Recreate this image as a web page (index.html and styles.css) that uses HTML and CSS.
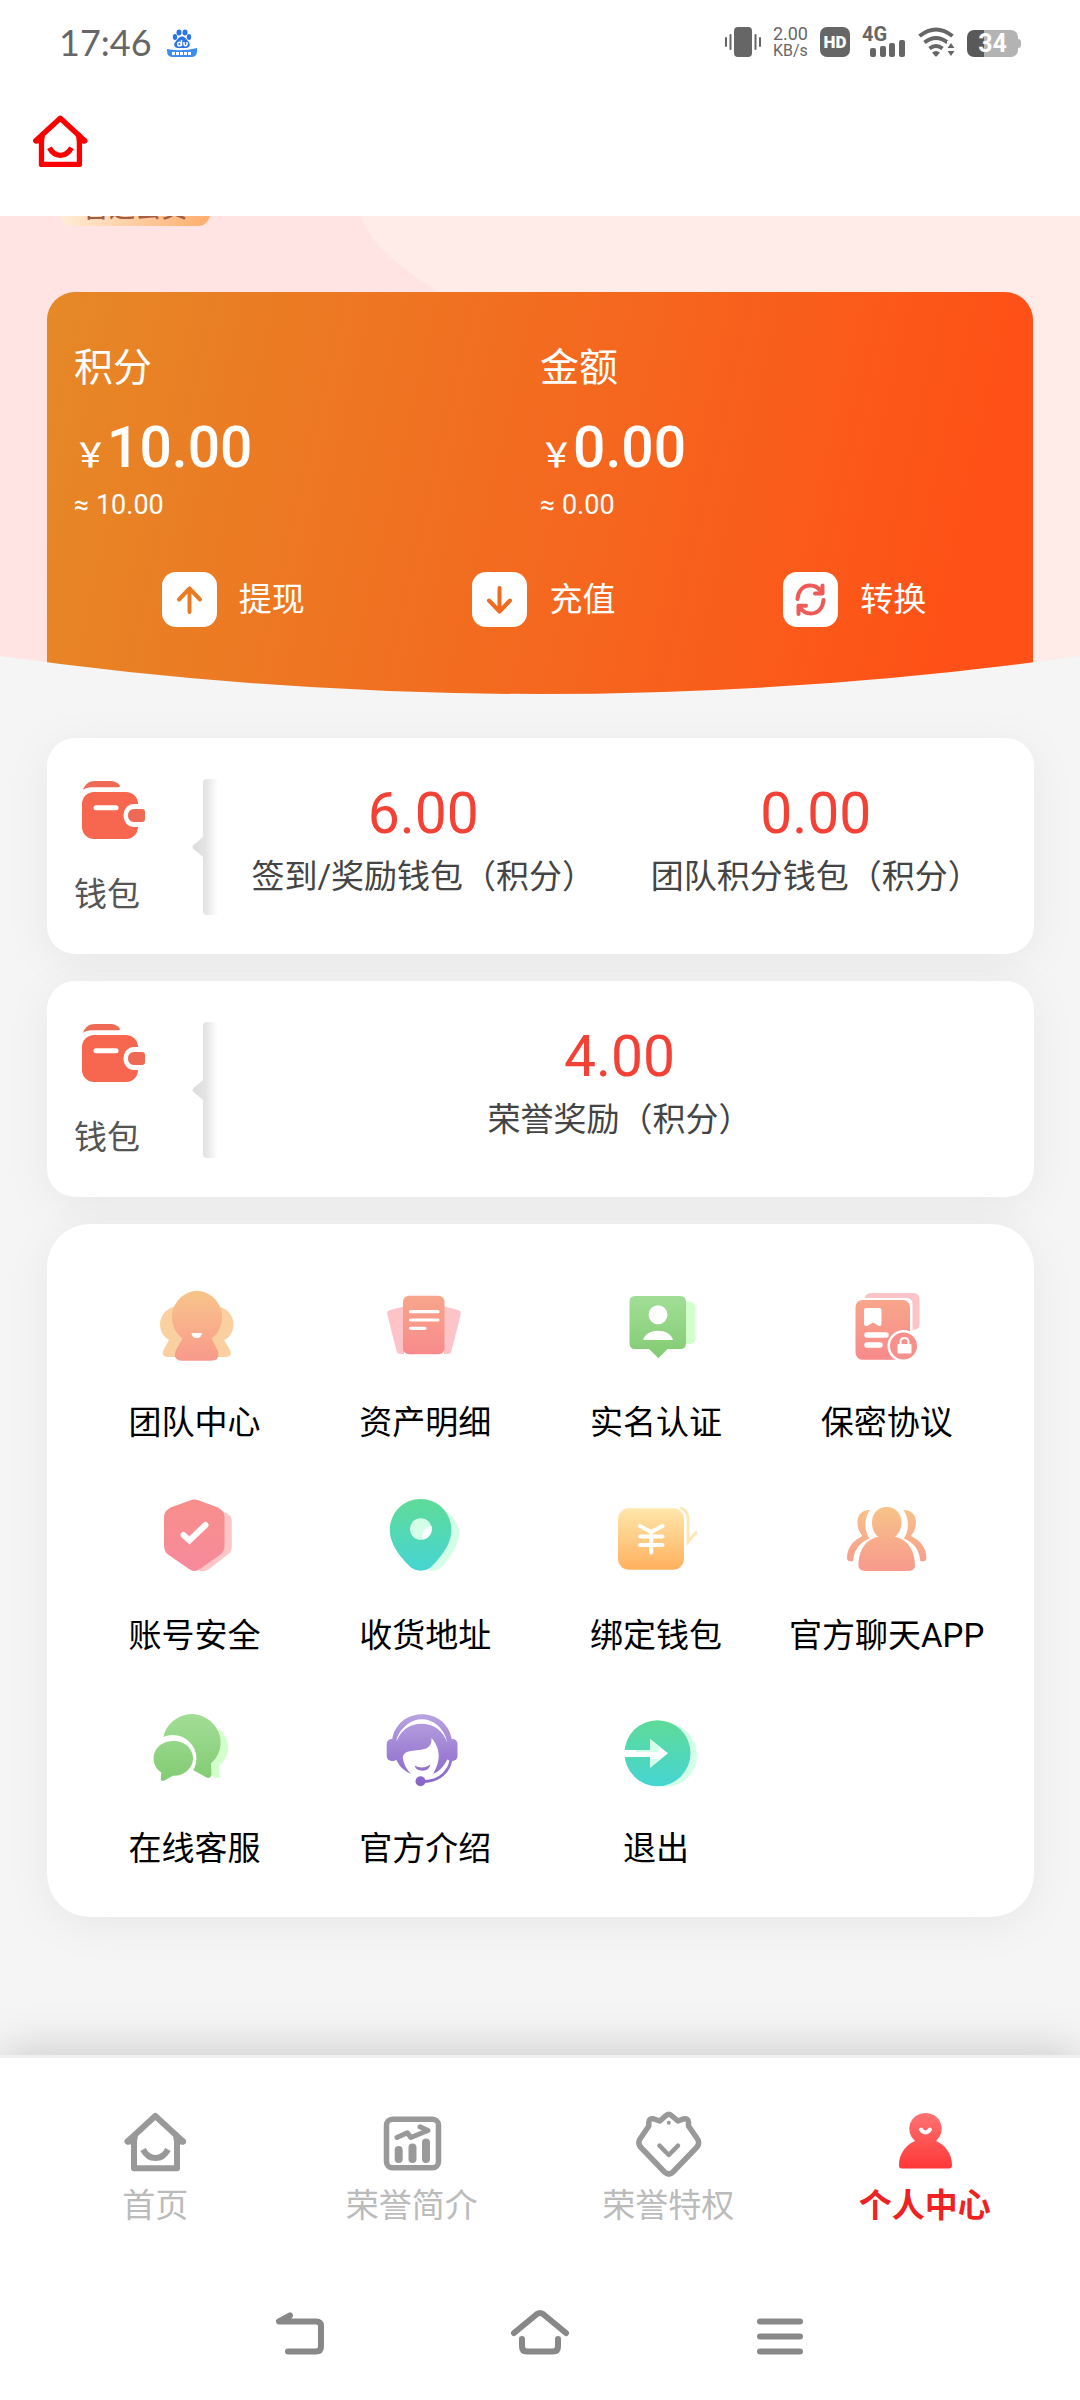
FILE: index.html
```html
<!DOCTYPE html>
<html lang="zh-CN">
<head>
  <meta charset="UTF-8">
  <meta name="viewport" content="width=device-width, initial-scale=1.0">
  <title>个人中心</title>
  <link rel="stylesheet" href="styles.css">
</head>
<body>
  <!-- gradients and icons used more than once -->
  <svg class="defs" width="0" height="0" aria-hidden="true">
    <defs>
      <linearGradient id="gOrange" x1="0" y1="0" x2="0" y2="1"><stop offset="0" stop-color="#f8c58a"/><stop offset="1" stop-color="#f8998c"/></linearGradient>
      <linearGradient id="gSalmon" x1="0" y1="0" x2="0" y2="1"><stop offset="0" stop-color="#f7a68b"/><stop offset="1" stop-color="#f88a8b"/></linearGradient>
      <linearGradient id="gGreen" x1="0" y1="0" x2="0" y2="1"><stop offset="0" stop-color="#a2de96"/><stop offset="1" stop-color="#82cb73"/></linearGradient>
      <linearGradient id="gPink" x1="0" y1="0" x2="0" y2="1"><stop offset="0" stop-color="#f88e8a"/><stop offset="1" stop-color="#f78a9c"/></linearGradient>
      <linearGradient id="gTeal" x1="0" y1="0" x2="0" y2="1"><stop offset="0" stop-color="#5edb98"/><stop offset="1" stop-color="#46d5d3"/></linearGradient>
      <linearGradient id="gYellow" x1="0" y1="0" x2="0" y2="1"><stop offset="0" stop-color="#ffe6ab"/><stop offset="1" stop-color="#ffb15e"/></linearGradient>
      <linearGradient id="gPeople" gradientUnits="userSpaceOnUse" x1="0" y1="14" x2="0" y2="78"><stop offset="0" stop-color="#f7c389"/><stop offset="1" stop-color="#f8998c"/></linearGradient>
      <linearGradient id="gPurple" gradientUnits="userSpaceOnUse" x1="0" y1="8" x2="0" y2="80"><stop offset="0" stop-color="#b9a3e0"/><stop offset="1" stop-color="#8763c8"/></linearGradient>
      <linearGradient id="gChat" gradientUnits="userSpaceOnUse" x1="0" y1="8" x2="0" y2="75"><stop offset="0" stop-color="#a2de96"/><stop offset="1" stop-color="#82cb73"/></linearGradient>
      <linearGradient id="gRed" gradientUnits="userSpaceOnUse" x1="0" y1="3" x2="0" y2="59"><stop offset="0" stop-color="#ff7373"/><stop offset="1" stop-color="#ff3636"/></linearGradient>
      <linearGradient id="gFade" x1="0" y1="0" x2="1" y2="0"><stop offset="0" stop-color="#dcdcdc"/><stop offset="0.5" stop-color="#e4e4e4"/><stop offset="1" stop-color="#ffffff"/></linearGradient>
    </defs>
    <symbol id="iHome" viewBox="0 0 68 68">
      <g fill="none" stroke="currentColor" stroke-width="6" stroke-linecap="round" stroke-linejoin="round">
        <path d="M6.500 31.500L34.300 6L62 31.500M13 31V58.300H56V31"/>
        <path d="M7 31.500H13L14 25M62 31.500H56L55 25"/>
        <path stroke-linecap="butt" d="M22 39.500Q26.500 48 34.500 48T47 39.500"/>
      </g>
    </symbol>
    <symbol id="iWallet" viewBox="0 0 68 68">
      <path fill="#ef6a55" d="M3 11.700C5 6 9 3 15 3H30C34 3 39 5 40 8Q40 9.300 38 9.300H11Q6 9.500 3 11.700Z"/>
      <rect x="2" y="14" width="56" height="47" rx="12" fill="#f7664f"/>
      <path d="M16 29.700H36" stroke="#fff" stroke-width="5" stroke-linecap="round"/>
      <path fill="#fff" d="M68 26H54C47 26 43.500 32 43.500 37.500S47 49 54 49H68Z"/>
      <path fill="#ef6a55" d="M54 31H62Q65 31 65 34V41Q65 44 62 44H54C50 44 48 41 48 37.500S50 31 54 31Z"/>
    </symbol>
    <symbol id="iDivider" viewBox="0 0 26 136">
      <path fill="url(#gFade)" d="M15 0H26V136H15Q11 136 11 132V78L1.500 70Q-0.500 68 1.500 66L11 58V4Q11 0 15 0Z"/>
    </symbol>
  </svg>

  <div class="status-bar">
    <div class="status-left">
      <span class="clock">17:46</span>
      <svg width="30" height="30" viewBox="0 0 30 30" aria-hidden="true">
        <g fill="#2b74e8">
          <ellipse cx="12" cy="5.500" rx="2.500" ry="3"/><ellipse cx="18" cy="5.500" rx="2.500" ry="3"/>
          <ellipse cx="8" cy="10" rx="2.200" ry="3"/><ellipse cx="22" cy="10" rx="2.200" ry="3"/>
          <path d="M15 9.500C18 9.500 19 12 21 14C24 17 23 21 19 21H11C7 21 6 17 9 14C11 12 12 9.500 15 9.500Z"/>
        </g>
        <path fill="#3b8df0" d="M0 22Q15 25 30 21V24Q30 30 24 30H6Q0 30 0 24Z"/>
        <path d="M5 26.500H25" stroke="#fff" stroke-width="3" stroke-dasharray="3 1"/>
        <g fill="none" stroke="#fff" stroke-width="1.500"><circle cx="12.500" cy="17" r="1.800"/><path d="M14.500 13V19M17 15V17.500Q18.500 20 20 17.500V15"/></g>
      </svg>
    </div>
    <div class="status-right">
      <svg width="36" height="30" viewBox="0 0 36 30" aria-hidden="true">
        <rect x="9" width="18" height="30" rx="4" fill="#666"/>
        <path d="M1 11V19M5.500 8V22M30.500 8V22M35 11V19" stroke="#666" stroke-width="2" stroke-linecap="round"/>
      </svg>
      <span class="speed"><b>2.00</b><span>KB/s</span></span>
      <span class="hd">HD</span>
      <span class="signal">
        <span class="net">4G</span>
        <svg width="36" height="17" viewBox="0 0 36 17" aria-hidden="true"><g fill="#666"><rect y="8" width="6" height="9" rx="2"/><rect x="10" y="6" width="6" height="11" rx="2"/><rect x="19" y="3" width="6" height="14" rx="2"/><rect x="29" width="6" height="17" rx="2"/></g></svg>
      </span>
      <svg width="37" height="30" viewBox="0 0 37 30" aria-hidden="true">
        <g fill="none" stroke="#666" stroke-width="4">
          <path d="M1.500 9Q18 -4 34.500 9"/><path d="M6.500 15.500Q18 6.500 29.500 15.500"/><path d="M11.500 21.500Q18 16.500 24.500 21.500"/>
        </g>
        <path fill="#666" d="M14 25.500Q18 22.500 22 25.500L19 29Q18 30 17 29Z"/>
        <path fill="#fff" d="M29 14H37V30H29Z"/>
        <path fill="#666" d="M33 16L36.500 21H29.500ZM33 29L36.500 24H29.500Z"/>
      </svg>
      <span class="battery">34</span>
    </div>
  </div>

  <header class="app-header">
    <a href="#" class="home-link" aria-label="首页"><svg width="60" height="60" aria-hidden="true"><use href="#iHome"/></svg></a>
  </header>

  <main>
    <section class="hero">
      <svg class="hero-bg" viewBox="0 0 1080 480" preserveAspectRatio="none" aria-hidden="true"><path fill="#ffebe8" d="M360 0C370 26 392 46 437 75Q540 140 620 480H1080V0Z"/></svg>
      <span class="badge">普通会员</span>
      <div class="balance-card">
        <div class="balances">
          <div>
            <h2>积分</h2>
            <p class="amount"><span>￥</span>10.00</p>
            <p class="approx">≈ 10.00</p>
          </div>
          <div>
            <h2>金额</h2>
            <p class="amount"><span>￥</span>0.00</p>
            <p class="approx">≈ 0.00</p>
          </div>
        </div>
        <div class="actions">
          <button type="button">
            <svg viewBox="0 0 55 55" aria-hidden="true"><path d="M27.500 40V16.500M17 27.500L27.500 16.500L38 27.500" stroke="#ea7b22"/></svg>
            提现
          </button>
          <button type="button">
            <svg viewBox="0 0 55 55" aria-hidden="true"><path d="M27.500 16V39.500M17 28.500L27.500 39.500L38 28.500" stroke="#f26a20"/></svg>
            充值
          </button>
          <button type="button">
            <svg viewBox="0 0 55 55" aria-hidden="true"><path d="M14.500 27C15 19 20 13.500 27 13.500C33 13.500 36 16 38.500 20M39.500 13.500V21.500H32M40.500 28C40 36 35 41.500 28 41.500C22 41.500 19 39 16.500 35M15.500 42V33.700H23" stroke="#ee5a55"/></svg>
            转换
          </button>
        </div>
      </div>
      <svg class="curve" viewBox="0 0 1080 42" preserveAspectRatio="none" aria-hidden="true"><path fill="#f5f5f5" d="M0 2Q540 78 1080 2V42H0Z"/></svg>
    </section>

    <section class="wallet card">
      <div class="wallet-side">
        <svg width="68" height="68" aria-hidden="true"><use href="#iWallet"/></svg>
        <span>钱包</span>
      </div>
      <svg class="divider" width="26" height="136" aria-hidden="true"><use href="#iDivider"/></svg>
      <div class="wallet-values">
        <div><strong>6.00</strong><span>签到/奖励钱包（积分）</span></div>
        <div><strong>0.00</strong><span>团队积分钱包（积分）</span></div>
      </div>
    </section>

    <section class="wallet card">
      <div class="wallet-side">
        <svg width="68" height="68" aria-hidden="true"><use href="#iWallet"/></svg>
        <span>钱包</span>
      </div>
      <svg class="divider" width="26" height="136" aria-hidden="true"><use href="#iDivider"/></svg>
      <div class="wallet-values">
        <div><strong>4.00</strong><span>荣誉奖励（积分）</span></div>
      </div>
    </section>

    <nav class="menu card">
      <a href="#">
        <svg viewBox="0 0 90 90" aria-hidden="true">
          <g fill="#fbd0a0">
            <circle cx="29" cy="44.500" r="18"/><circle cx="66.500" cy="44.500" r="18"/>
            <path d="M20 60L14.500 70Q12 76 18 77H77Q84 76 81 70L75 60L60 50H34Z"/>
          </g>
          <path fill="url(#gOrange)" d="M48 10.700A26 26.500 0 0 1 62.500 58.500L68.500 70Q72 80.700 62 80.700H33Q23 80 27 70L33.500 58.500A26 26.500 0 0 1 48 10.700Z"/>
          <path fill="#fff" d="M42.500 53H53Q52.500 58 47.700 58T42.500 53Z"/>
        </svg>
        团队中心
      </a>
      <a href="#">
        <svg viewBox="0 0 90 90" aria-hidden="true">
          <path fill="#fcc4c6" d="M10 30L24 26.500V74H20Q17 74 16.500 71L7.200 34Q6.500 31 10 30ZM78 30L64 26.500V74H68Q71 74 71.500 71L80.800 34Q81.500 31 78 30Z"/>
          <rect x="23" y="15.700" width="41.500" height="58.500" rx="6" fill="url(#gSalmon)"/>
          <path d="M30.500 31.700H58M30.500 40H58M30.500 48.300H45" stroke="#fff" stroke-width="3.200" stroke-linecap="round"/>
        </svg>
        资产明细
      </a>
      <a href="#">
        <svg viewBox="0 0 90 90" aria-hidden="true">
          <rect x="50" y="21.700" width="34.500" height="42.500" rx="6" fill="#d3ffcc"/>
          <path fill="url(#gGreen)" d="M24 16H69.500Q75 16 75 22V63Q75 69 69.500 69H56.500L47.400 78.300L38 69H24Q18.500 69 18.500 63V22Q18.500 16 24 16Z"/>
          <g fill="#fff"><circle cx="47" cy="34.700" r="9.500"/><path d="M32 60C35 47.500 59 47.500 62 60Z"/></g>
        </svg>
        实名认证
      </a>
      <a href="#">
        <svg viewBox="0 0 90 90" aria-hidden="true">
          <path fill="#fcc4c6" d="M22.500 18Q24 13 30 13H71Q77.500 13 77.500 20V44Q77.500 50 70.500 50V24Q70.500 18 64 18Z"/>
          <rect x="13.500" y="20" width="54.500" height="59.700" rx="7" fill="url(#gSalmon)"/>
          <path fill="#fff" d="M24 28H37.500Q39.500 28 39.500 30V44Q39 47 36 45.500L31 42.500L26 45.500Q22.500 47 22 44V30Q22 28 24 28Z"/>
          <path d="M25 55H44M25 65H38" stroke="#fff" stroke-width="5.500" stroke-linecap="round"/>
          <circle cx="61.500" cy="66" r="16" fill="#fff"/><circle cx="61.500" cy="66" r="13.500" fill="#f6908b"/>
          <rect x="55.500" y="64" width="14" height="9.500" rx="1" fill="#fff"/>
          <path d="M58.500 64V61.500Q59 58 62.500 58T66.500 61.500V64" fill="none" stroke="#fff" stroke-width="2"/>
        </svg>
        保密协议
      </a>
      <a href="#">
        <svg viewBox="0 0 90 90" aria-hidden="true">
          <path fill="#fcc5c6" d="M70 18Q82.800 20 82.800 28V54Q82.800 59 78 62L61 75.500Q56 79 51 78L48 70Z"/>
          <path fill="url(#gPink)" d="M41 7.500Q45.500 5.500 50 7.500L69 14.500Q75.500 18 75.500 24V53Q75.500 58 71.500 61.500L51 76Q45.500 80 40 76L19 61.500Q15 58 15 53V24Q15 18 21.500 14.500Z"/>
          <path d="M34.500 42L40.500 47.500L56.500 32" fill="none" stroke="#fff" stroke-width="6" stroke-linecap="round"/>
        </svg>
        账号安全
      </a>
      <a href="#">
        <svg viewBox="0 0 90 90" aria-hidden="true">
          <path fill="#d3ffe8" d="M66 19C76 25 81 35 78.500 46C75 60 66 69 60 75.500Q55 79 49 77.500Z"/>
          <path fill="url(#gTeal)" d="M40.700 6C58 6 71.400 20 71.400 37C71.400 53 58 67 50 75Q46 77.700 40.700 77.700T31.500 75C23 67 9.800 53 9.800 37C9.800 20 23 6 40.700 6Z"/>
          <circle cx="40.800" cy="36" r="10.800" fill="#d3ffe8"/>
          <path fill="#fff" d="M51.500 33A10.800 10.800 0 0 1 43 46.500C40.500 42 44 33.500 51.500 33Z"/>
        </svg>
        收货地址
      </a>
      <a href="#">
        <svg viewBox="0 0 90 90" aria-hidden="true">
          <path d="M70.500 15.300Q77 18 77 26V49L85 39.500" fill="none" stroke="#ffe6b0" stroke-width="2.800" stroke-linecap="round"/>
          <rect x="7" y="15.300" width="66" height="61.500" rx="11" fill="url(#gYellow)"/>
          <path d="M29 33L40.200 39L51.500 33M29 43.500H51.500M29 52H51.500M40.200 39V59.500" fill="none" stroke="#fff" stroke-width="4" stroke-linecap="round"/>
        </svg>
        绑定钱包
      </a>
      <a href="#">
        <svg viewBox="0 0 90 90" aria-hidden="true">
          <g fill="url(#gPeople)">
            <path d="M28 17C18 17 15 24 15.500 31C16 37 18 40 20 42Q20.500 43.500 18 44.500C9 49 5 57 5 65Q5 68 8 68.200H11C12 57 17 50 27.500 45.500C22 38 22 25 28 17Z"/>
            <path transform="matrix(-1 0 0 1 89.400 0)" d="M28 17C18 17 15 24 15.500 31C16 37 18 40 20 42Q20.500 43.500 18 44.500C9 49 5 57 5 65Q5 68 8 68.200H11C12 57 17 50 27.500 45.500C22 38 22 25 28 17Z"/>
            <path d="M44.700 14C54 14 59.500 21 59.500 30C59.500 35 57 41 53 43.800C65 46 73 57 73 73Q73 78 64 78H25Q16.500 78 16.500 73C16.500 57 24 46 36.500 43.800C32 41 30 35 30 30C30 21 35 14 44.700 14Z"/>
          </g>
        </svg>
        官方聊天APP
      </a>
      <a href="#">
        <svg viewBox="0 0 90 90" aria-hidden="true">
          <path fill="#d3ffcc" d="M70 23C81 32 84 48 70 60L71 69Q70.500 73 66 72L58 66V40Z"/>
          <path fill="url(#gChat)" d="M43.100 8A29.500 28.500 0 0 1 62 57.500L62.500 69Q61.500 73 57.500 71.500L44 64L35 45L14 33A29.500 28.500 0 0 1 43.100 8Z"/>
          <circle cx="23.900" cy="52.500" r="23.500" fill="#fff"/>
          <path fill="url(#gChat)" d="M23.900 35A18.700 17.400 0 1 1 23.900 69.700L15.500 74.500Q12 76 11.800 72.500L12.300 66.500A18.700 17.400 0 0 1 23.900 35Z"/>
        </svg>
        在线客服
      </a>
      <a href="#">
        <svg viewBox="0 0 90 90" aria-hidden="true">
          <g fill="url(#gPurple)">
            <path d="M12 34.500C17 -0.500 67 -0.500 72 34.500L66.500 36C61 5.500 23 5.500 17 36Z"/>
          </g>
          <path fill="#fff" d="M16 36C21 8 62 8 67 36Z"/>
          <g fill="url(#gPurple)">
            <rect x="6.700" y="33" width="11.500" height="22" rx="5"/><rect x="66" y="33" width="11.500" height="22" rx="5"/>
            <path d="M16 38C22 11 61 11 67.500 38V53C64 60 60 65 53 68C57 61 59 55 58.700 49C58.500 42 55 36 51.500 32C52 45 42 43 31 45C24 46 22.500 49 23 53C24 59 27 64 31 68C23 64 19 60 16 53Z"/>
            <path d="M34.500 59.500Q42.500 64 50.500 58.500Q49 64.700 42.500 64.700T34.500 59.500Z"/>
            <circle cx="40.500" cy="75.300" r="5"/>
          </g>
          <path d="M71 54C69 65 60 75 44 75.500" fill="none" stroke="url(#gPurple)" stroke-width="2.800"/>
        </svg>
        官方介绍
      </a>
      <a href="#">
        <svg viewBox="0 0 90 90" aria-hidden="true">
          <circle cx="54" cy="49" r="32" fill="#d3ffe8"/>
          <circle cx="46.500" cy="47.200" r="33" fill="url(#gTeal)"/>
          <path fill="#fff" d="M13 44H39V33L57 47.300L39 61.700V51H13Z"/>
          <path fill="#d3ffe8" d="M39 33L49 41L47 46H25V44H39ZM39 61.700V53H48L50 53Z"/>
        </svg>
        退出
      </a>
    </nav>
  </main>

  <footer class="bottom">
    <nav class="tabs">
      <a href="#"><svg width="68" height="68" aria-hidden="true"><use href="#iHome"/></svg>首页</a>
      <a href="#">
        <svg width="68" height="68" viewBox="0 0 68 68" aria-hidden="true">
          <g fill="none" stroke="currentColor" stroke-linecap="round" stroke-linejoin="round">
            <rect x="8.500" y="9.300" width="52" height="48.500" rx="6" stroke-width="5.500"/>
            <path stroke-width="8" d="M20.700 40V49M34.500 37.500V49M48 32.500V49"/>
            <path stroke-width="5" d="M19 27.500L29.300 22.700L32.800 27.500L50 20.500L42 16.800"/>
          </g>
        </svg>
        荣誉简介
      </a>
      <a href="#">
        <svg width="68" height="68" viewBox="0 0 68 68" aria-hidden="true">
          <g fill="none" stroke="currentColor" stroke-width="5.500" stroke-linejoin="round" stroke-linecap="round">
            <path d="M25.800 11L31.500 6Q34.800 2.500 38 6L44 11L49 9Q55 8 54.500 13V16L63.500 29Q66 33 63 37L39 62Q34.800 66 30.500 62L6.500 37Q3.500 33 6 29L14.800 16V13Q14.500 8 20 9Z"/>
            <path stroke-width="4.500" d="M25.500 35.700L34.800 45L44 35.700"/>
          </g>
          <circle cx="34.800" cy="12.700" r="2" fill="currentColor"/>
        </svg>
        荣誉特权
      </a>
      <a href="#" class="active">
        <svg width="68" height="68" viewBox="0 0 68 68" aria-hidden="true">
          <path fill="url(#gRed)" d="M34.300 3A15.800 15.800 0 0 1 45 31C55 35 61 45 61 55Q61 58.500 58 58.500H11Q8 58.500 8 55C8 45 14 35 24 31A15.800 15.800 0 0 1 34.300 3Z"/>
          <path d="M30 19.500Q34.500 25.500 39 19.500" fill="none" stroke="#fff" stroke-width="4" stroke-linecap="round"/>
        </svg>
        个人中心
      </a>
    </nav>
    <div class="system-nav">
      <button type="button" aria-label="返回"><svg width="60" height="50" viewBox="0 0 60 50" aria-hidden="true"><path d="M20 7.500L9 13.500H46Q51 13.500 51 18V38.500Q51 43.500 46 43.500H18"/></svg></button>
      <button type="button" aria-label="主屏幕"><svg width="60" height="50" viewBox="0 0 60 50" aria-hidden="true"><path d="M4 25L27 6Q30 4 33 6L56 25M12 31V38.500Q12 43.500 17 43.500H43Q48 43.500 48 38.500V31"/></svg></button>
      <button type="button" aria-label="最近任务"><svg width="60" height="50" viewBox="0 0 60 50" aria-hidden="true"><path d="M10 13.500H50M10 28.500H50M10 43.500H50"/></svg></button>
    </div>
  </footer>
</body>
</html>
```
FILE: styles.css
```css
* {
  margin: 0;
  padding: 0;
  box-sizing: border-box;
}

body {
  font-family: Roboto, "Noto Sans CJK SC", sans-serif;
  font-size: 33px;
  line-height: 44px;
  color: #000;
  background: #f5f5f5;
  min-height: 100vh;
  display: flex;
  flex-direction: column;
}

a {
  color: inherit;
  text-decoration: none;
}

button {
  font: inherit;
  color: inherit;
  background: none;
  border: none;
  cursor: pointer;
}

svg {
  display: block;
  flex-shrink: 0;
}

.defs {
  position: absolute;
}

/* status bar */
.status-bar {
  display: flex;
  justify-content: space-between;
  align-items: center;
  height: 84px;
  padding: 0 62px 0 59px;
  background: #fff;
  color: #666;
}

.status-left,
.status-right {
  display: flex;
  align-items: center;
}

.status-left {
  gap: 15px;
}

.status-right {
  gap: 12px;
}

.clock {
  font-family: Lato, sans-serif;
  font-size: 36px;
}

.speed {
  display: flex;
  flex-direction: column;
  align-items: center;
  font-size: 16px;
  line-height: 17px;
}

.speed b {
  font-weight: 400;
  font-size: 18px;
}

.hd {
  width: 30px;
  height: 30px;
  border-radius: 7px;
  background: #666;
  color: #fff;
  font-size: 17px;
  font-weight: 900;
  line-height: 30px;
  text-align: center;
}

.signal {
  display: flex;
  flex-direction: column;
  height: 30px;
  width: 44px;
}

.net {
  font-size: 20px;
  font-weight: 700;
  line-height: 14px;
}

.signal svg {
  align-self: flex-end;
  margin-top: -1px;
}

.battery {
  position: relative;
  width: 51px;
  height: 27px;
  margin-top: 3px;
  border-radius: 7px;
  background: linear-gradient(90deg, #595959 34%, #b3b3b3 34%);
  color: #fff;
  font-size: 25px;
  font-weight: 700;
  line-height: 28px;
  text-align: center;
}

.battery::after {
  content: "";
  position: absolute;
  left: 100%;
  top: 9px;
  width: 3px;
  height: 9px;
  border-radius: 0 3px 3px 0;
  background: #b3b3b3;
}

.app-header {
  padding: 29px 30px 43px;
  background: #fff;
}

.home-link {
  display: inline-block;
  vertical-align: top;
  color: #fa0000;
}

main {
  flex: 1;
}

/* balance area */
.hero {
  position: relative;
  overflow: hidden;
  padding: 0 47px;
  background: #ffe4e3;
}

.hero-bg {
  position: absolute;
  inset: 0;
  width: 100%;
  height: 100%;
}

.badge {
  position: relative;
  display: block;
  width: 150px;
  height: 36px;
  margin: -26px 0 66px 13px;
  border-radius: 0 0 12px 12px;
  background: linear-gradient(100deg, #fff0dc, #ffad6b);
  color: #a55d46;
  font-size: 26px;
  font-weight: 500;
  line-height: 36px;
  text-align: center;
}

.balance-card {
  position: relative;
  padding: 46px 27px 69px;
  border-radius: 28px 28px 0 0;
  background: linear-gradient(103deg, #e58927 0%, #f26d20 45%, #ff5017 92%);
  color: #fff;
}

.balances {
  display: grid;
  grid-template-columns: 1fr 1fr;
}

.balances h2 {
  font-size: 39px;
  font-weight: 400;
  line-height: 60px;
  margin-bottom: 14px;
}

.amount {
  font-size: 57px;
  font-weight: 500;
  line-height: 72px;
}

.amount span {
  font-family: "Noto Sans CJK SC", sans-serif;
  font-size: 33px;
  line-height: 44px;
}

.approx {
  font-size: 27px;
  line-height: 42px;
}

.actions {
  display: grid;
  grid-template-columns: 1fr 1fr 1fr;
  margin-top: 46px;
}

.actions button {
  display: flex;
  justify-content: center;
  align-items: center;
  gap: 22px;
  padding-left: 8px;
}

.actions svg {
  width: 55px;
  height: 55px;
  border-radius: 14px;
  background: #fff;
  fill: none;
  stroke-width: 4;
  stroke-linecap: round;
  stroke-linejoin: round;
}

.curve {
  position: absolute;
  left: 0;
  bottom: 0;
  width: 100%;
  height: 42px;
}

/* cards */
.card {
  margin: 27px 46px 0 47px;
  background: #fff;
  box-shadow: 0 8px 48px rgba(0, 0, 0, 0.06);
}

.hero + .card {
  margin-top: 42px;
}

.wallet {
  display: flex;
  padding: 40px 22px 37px 27px;
  border-radius: 28px;
}

.wallet-side {
  width: 118px;
  color: #555;
}

.wallet-side svg {
  margin: 0 0 27px 6px;
}

.divider {
  margin-top: 1px;
}

.wallet-values {
  flex: 1;
  display: flex;
  margin-left: 9px;
}

.wallet-values div {
  flex: 1;
  display: flex;
  flex-direction: column;
  align-items: center;
  gap: 5px;
  color: #444;
}

.wallet-values strong {
  font-size: 57px;
  font-weight: 400;
  line-height: 72px;
  color: #f34235;
}

.wallet-values span {
  white-space: nowrap;
}

.menu {
  display: grid;
  grid-template-columns: repeat(4, 1fr);
  row-gap: 48px;
  padding: 56px 32px 46px;
  border-radius: 43px;
}

.menu a {
  display: flex;
  flex-direction: column;
  align-items: center;
  gap: 31px;
  white-space: nowrap;
}

.menu svg {
  width: 90px;
  height: 90px;
}

/* bottom bar */
.bottom {
  position: relative;
  border-top: 3px solid #f0f0f0;
  background: #fff;
  box-shadow: 0 0 48px rgba(0, 0, 0, 0.2);
}

.tabs {
  display: grid;
  grid-template-columns: repeat(4, 1fr);
  padding: 52px 27px 0;
}

.tabs a {
  display: flex;
  flex-direction: column;
  align-items: center;
  gap: 6px;
  color: #bbb;
}

.tabs svg {
  color: #999;
}

.tabs .active {
  color: #ee2222;
  font-weight: 700;
}

.system-nav {
  display: flex;
  justify-content: center;
  gap: 180px;
  padding: 80px 0 42px;
}

.system-nav svg {
  fill: none;
  stroke: #888;
  stroke-width: 6;
  stroke-linecap: round;
  stroke-linejoin: round;
}
```
